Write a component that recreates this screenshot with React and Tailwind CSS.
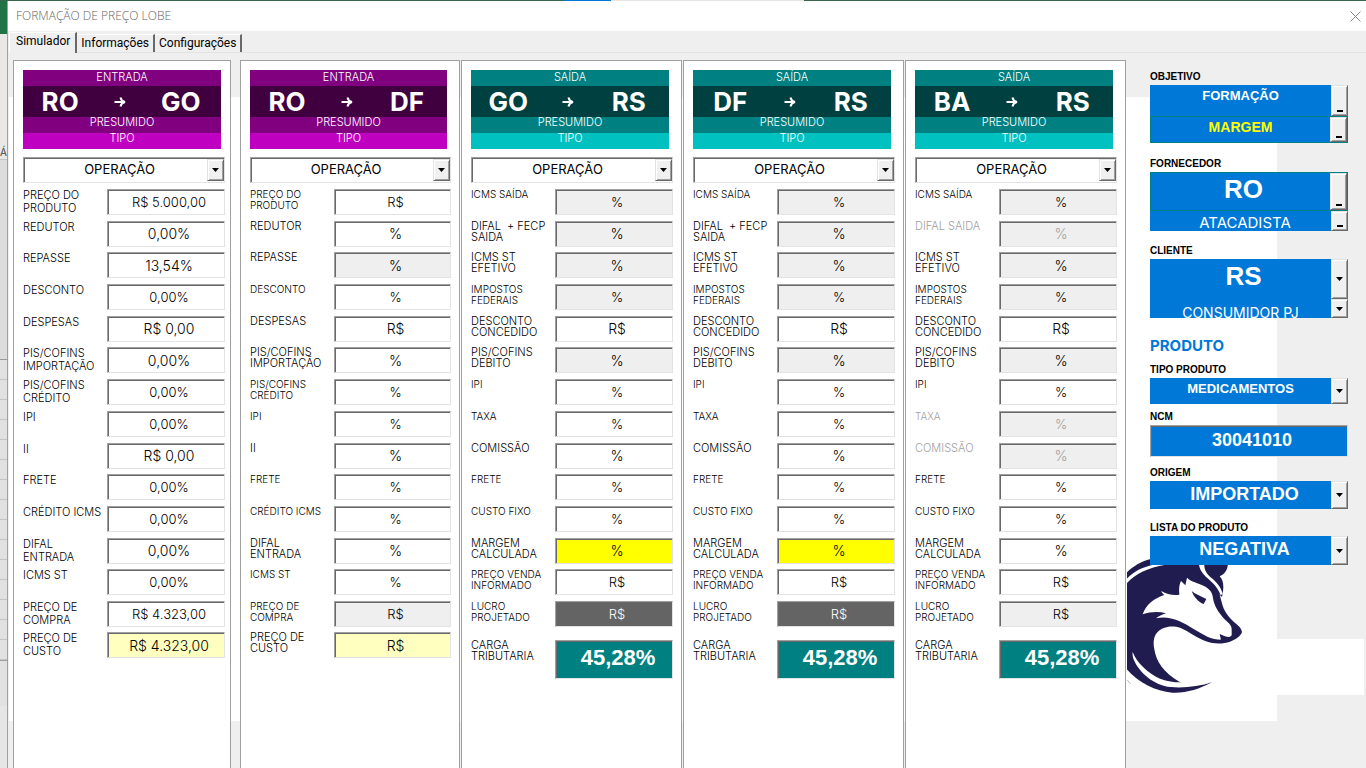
import React from "react";

const BODY = "font-['Inter',sans-serif]";

const ENTRY_LABELS = [
  "PREÇO DO\nPRODUTO", "REDUTOR", "REPASSE", "DESCONTO", "DESPESAS",
  "PIS/COFINS\nIMPORTAÇÃO", "PIS/COFINS\nCRÉDITO", "IPI", "II", "FRETE",
  "CRÉDITO ICMS", "DIFAL\nENTRADA", "ICMS ST", "PREÇO DE\nCOMPRA", "PREÇO DE\nCUSTO",
];
const ENTRY_A = [
  "R$ 5.000,00", "0,00%", "13,54%", "0,00%", "R$ 0,00", "0,00%", "0,00%", "0,00%",
  "R$ 0,00", "0,00%", "0,00%", "0,00%", "0,00%", "R$ 4.323,00", "R$ 4.323,00",
];
const ENTRY_B = ["R$", "%", "%", "%", "R$", "%", "%", "%", "%", "%", "%", "%", "%", "R$", "R$"];
const EXIT_LABELS = [
  "ICMS SAÍDA", "DIFAL  + FECP\nSAIDA", "ICMS ST\nEFETIVO", "IMPOSTOS\nFEDERAIS",
  "DESCONTO\nCONCEDIDO", "PIS/COFINS\nDEBITO", "IPI", "TAXA", "COMISSÃO", "FRETE",
  "CUSTO FIXO", "MARGEM\nCALCULADA", "PREÇO VENDA\nINFORMADO", "LUCRO\nPROJETADO",
];
const EXIT_VALUES = ["%", "%", "%", "%", "R$", "%", "%", "%", "%", "%", "%", "%", "R$", "R$"];
const LARGE = [1, 2, 4, 5, 8, 11, 14];

const TONES = {
  white: "bg-white text-black",
  gray: "bg-[#efefef] text-black",
  off: "bg-[#efefef] text-[#a0a0a0]",
  cream: "bg-[#ffffc0] text-black",
  yellow: "bg-[#ffff00] text-black",
  dark: "bg-[#646464] text-white",
};

const PURPLE = { mid: "bg-[#800080]", deep: "bg-[#400040]", light: "bg-[#c000c0]" };
const TEAL = { mid: "bg-[#008080]", deep: "bg-[#004040]", light: "bg-[#00c0c0]" };

const SUNKEN =
  "border border-t-[#a0a0a0] border-l-[#a0a0a0] border-r-[#e3e3e3] border-b-[#e3e3e3] shadow-[inset_1px_1px_0_#696969]";
const RAISED =
  "bg-[#f0f0f0] border border-t-[#e3e3e3] border-l-[#e3e3e3] border-r-[#696969] border-b-[#696969] shadow-[inset_1px_1px_0_#ffffff,inset_-1px_-1px_0_#a0a0a0]";

function Field({ id, label, value, tone, large, loose }) {
  const off = tone === "off";
  const size = loose ? "text-[11px] leading-[13px]" : large ? "text-[11px] leading-[11px]" : "text-[10px] leading-[11px]";
  return (
    <div className="flex h-[26px]">
      <label
        htmlFor={id}
        className={`w-[84px] shrink-0 whitespace-pre font-light ${size} ${off ? "text-[#a0a0a0]" : "text-black"}`}
      >
        {label}
      </label>
      <input
        id={id}
        defaultValue={value}
        disabled={off}
        className={`h-[26px] w-0 min-w-0 flex-1 rounded-none pl-[6px] text-center font-light outline-none ${large ? "text-[14px]" : "text-[13px]"} ${SUNKEN} ${TONES[tone]}`}
      />
    </div>
  );
}

function Arrow() {
  return (
    <svg width="7" height="4" viewBox="0 0 7 4" className="block" aria-hidden="true">
      <path d="M0 0h7L3.5 4z" fill="#000" />
    </svg>
  );
}

function RouteHeader({ kind, from, to, colors }) {
  return (
    <div className="mr-[4px] text-center text-[11px] leading-[14px] font-light text-white">
      <div className={`h-4 ${colors.mid}`}>{kind}</div>
      <div className={`grid h-[31px] grid-cols-3 items-center pr-[10px] pl-[7px] text-[26px] font-bold leading-none ${colors.deep}`}>
        <span>{from}</span>
        <span className="flex justify-center">
          <svg width="12" height="12" viewBox="0 0 12 12" fill="none" stroke="#fff" strokeWidth="2" aria-label="para">
            <path d="M0.5 6H10M6.5 1.5C7 4 8.5 5.5 11 6C8.500 6.500 7 8 6.500 10.500" />
          </svg>
        </span>
        <span>{to}</span>
      </div>
      <div className={`h-4 leading-[11px] ${colors.mid}`}>PRESUMIDO</div>
      <div className={`h-4 leading-[11px] ${colors.light}`}>TIPO</div>
    </div>
  );
}

function Column({ id, kind, from, to, colors, labels, values, tones, loose, total, className }) {
  const fields = labels.map((label, i) => ({
    id: `${id}-${i}`,
    label,
    value: values[i],
    tone: tones[i] || "white",
    large: LARGE.includes(i),
    loose,
  }));
  return (
    <section className={`flex min-w-0 flex-col border border-b-0 border-[#a0a0a0] bg-white pt-[9px] pl-[9px] ${className}`}>
      <RouteHeader kind={kind} from={from} to={to} colors={colors} />
      <div className={`mt-2 flex h-[26px] bg-white ${SUNKEN}`}>
        <select
          aria-label={`Operação ${from} ${to}`}
          className="min-w-0 flex-1 appearance-none bg-transparent pl-2 text-center text-[13px] outline-none"
        >
          <option>OPERAÇÃO</option>
        </select>
        <span className={`my-px flex w-[17px] items-center justify-center ${RAISED}`}>
          <Arrow />
        </span>
      </div>
      <div className="mt-[6px] flex h-[438px] flex-col justify-between">
        {fields.slice(0, 14).map((f) => (
          <Field key={f.id} {...f} />
        ))}
      </div>
      {fields.slice(14).map((f) => (
        <div key={f.id} className="mt-[5px]">
          <Field {...f} />
        </div>
      ))}
      {total && (
        <div className="mt-[13px] flex h-[39px]">
          <label htmlFor={`${id}-total`} className="w-[84px] shrink-0 whitespace-pre text-[11px] leading-[11px] font-light">
            {"CARGA\nTRIBUTARIA"}
          </label>
          <input
            id={`${id}-total`}
            defaultValue={total}
            className={`w-0 min-w-0 flex-1 rounded-none bg-[#008080] pb-1 pl-2 text-center font-['Liberation_Sans',sans-serif] text-[22px] font-bold text-white outline-none ${SUNKEN}`}
          />
        </div>
      )}
    </section>
  );
}

function Combo({ id, name, value, height, text, framed, dash }) {
  return (
    <div className={`flex ${height} ${framed ? "border border-[#008080]" : ""}`}>
      <select
        id={id}
        aria-label={name}
        className={`min-w-0 flex-1 appearance-none overflow-hidden rounded-none bg-[#0078d7] text-center outline-none ${text}`}
      >
        <option>{value}</option>
      </select>
      <span className={`flex w-[17px] justify-center ${dash ? "items-end pb-[3px]" : "items-center"} ${RAISED}`}>
        {dash ? <span className="h-[2px] w-[6px] bg-black" /> : <Arrow />}
      </span>
    </div>
  );
}

const ARIAL = "font-['Liberation_Sans',sans-serif] font-bold";
const CAPTION = `block h-[14px] text-[10px] leading-[12px] text-black ${ARIAL}`;

function SidePanel() {
  return (
    <aside className="w-[240px] shrink-0 pt-[11px] pr-[18px] pl-6">
      <label htmlFor="objetivo" className={CAPTION}>OBJETIVO</label>
      <Combo id="objetivo" value="FORMAÇÃO" dash height="h-[31px]" text={`pb-[9px] text-[13px] text-white ${ARIAL}`} />
      <Combo name="Margem" value="MARGEM" dash framed height="h-[27px]" text={`pb-[5px] text-[14px] text-[#ffff00] ${ARIAL}`} />

      <label htmlFor="fornecedor" className={`mt-[15px] ${CAPTION}`}>FORNECEDOR</label>
      <Combo id="fornecedor" value="RO" dash framed height="h-[39px]" text={`pb-[5px] pl-[6px] text-[26px] leading-[28px] text-white ${ARIAL}`} />
      <Combo name="Tipo de fornecedor" value="ATACADISTA" dash height="h-[20px]" text="pt-[2px] pl-[9px] text-[15px] leading-none text-white" />

      <label htmlFor="cliente" className={`mt-[14px] ${CAPTION}`}>CLIENTE</label>
      <Combo id="cliente" value="RS" height="h-[40px]" text={`pb-[7px] pl-[6px] text-[26px] leading-[28px] text-white ${ARIAL}`} />
      <Combo name="Tipo de cliente" value="CONSUMIDOR PJ" height="h-[19px]" text="pt-[7px] text-[14px] leading-none text-white" />

      <h2 className="mt-5 text-[15px] font-bold leading-[16px] text-[#0078d7]">PRODUTO</h2>
      <label htmlFor="tipo" className={`mt-[10px] ${CAPTION}`}>TIPO PRODUTO</label>
      <Combo id="tipo" value="MEDICAMENTOS" height="h-[26px]" text={`pb-[5px] text-[13px] text-white ${ARIAL}`} />

      <label htmlFor="ncm" className={`mt-[7px] ${CAPTION}`}>NCM</label>
      <input
        id="ncm"
        defaultValue="30041010"
        className={`block h-[32px] w-full rounded-none bg-[#0078d7] pb-px pl-[6px] text-center text-[18px] text-white outline-none ${ARIAL} ${SUNKEN}`}
      />

      <label htmlFor="origem" className={`mt-[10px] ${CAPTION}`}>ORIGEM</label>
      <Combo id="origem" value="IMPORTADO" height="h-[28px]" text={`pb-[2px] pl-2 text-[18px] text-white ${ARIAL}`} />

      <label htmlFor="lista" className={`mt-[13px] ${CAPTION}`}>LISTA DO PRODUTO</label>
      <Combo id="lista" value="NEGATIVA" height="h-[29px]" text={`pb-[3px] pl-2 text-[18px] text-white ${ARIAL}`} />
    </aside>
  );
}

function Wolf() {
  return (
    <svg width="150" height="165" viewBox="9 0 450 495" className="shrink-0" aria-hidden="true">
      <path
        fill="#211c50"
        d="M0 58C20 36 45 18 80 9H314L311 30C309 45 299 56 287 61C298 72 301 92 295 116C296 125 290 124 286 112C290 128 294 145 300 160C308 176 318 188 330 198C345 210 352 217 354 228C351 240 335 250 318 257C298 264 270 265 246 256C220 246 200 230 170 216C140 206 115 214 101 228C88 240 87 262 91 280C96 315 118 350 167 378C195 392 235 388 264 379C225 400 185 412 145 410C90 406 35 375 0 330Z"
      />
      <g fill="#fff">
        <path d="M0 92C25 58 65 36 125 26H88C50 34 22 50 0 78Z" />
        <path d="M225 22C225 40 236 54 250 66C268 82 282 95 290 118L296 113C290 90 276 76 258 62C244 50 240 36 241 22Z" />
        <path d="M56 175C66 145 92 126 121 117C116 113 113 109 112 105C128 115 148 119 166 116C164 98 166 84 171 75L184 88L189 65C202 78 222 80 240 90C256 98 265 108 267 126C270 150 285 172 304 192C316 202 324 210 323 222V238C318 245 311 244 303 241L287 234C288 241 291 247 290 251C280 250 262 248 250 242C220 228 195 208 165 195C142 185 118 182 96 187C104 181 114 175 126 172C105 166 80 167 56 175Z" />
        <path d="M26 288C38 320 72 352 108 368C130 377 150 378 168 379C195 385 230 386 264 379C225 391 180 397 140 393C90 388 45 350 28 308C26 300 25 294 26 288Z" />
      </g>
      <path fill="#211c50" d="M203 105C214 115 230 120 247 129L239 144C223 138 210 124 203 105Z" />
      <path fill="none" stroke="#211c50" d="M9 371L19 383" />
    </svg>
  );
}

function Backdrop() {
  return (
    <div className="flex min-w-0 items-start pt-11 [grid-area:1/1]" aria-hidden="true">
      <div className="flex h-[624px] min-w-0 flex-1 items-end justify-end bg-white">
        <Wolf />
      </div>
      <div className="mt-[542px] mr-[2px] h-14 w-[87px] bg-white" />
    </div>
  );
}

function SheetEdge() {
  return (
    <div className="flex w-2 shrink-0 flex-col overflow-hidden border-r border-[#a0a0a0] bg-[#e1e1e1] text-[10px] text-[#444]" aria-hidden="true">
      <div className="h-[33px] shrink-0 bg-[#217346]" />
      <div className="h-[126px] shrink-0 border-b border-[#c4c4c4] bg-[#e9e8e7] pt-[110px] leading-[16px]">Á</div>
      <div className="h-[200px] shrink-0 border-b border-[#999] bg-[#dcdcdc]" />
      {Array.from({ length: 15 }, (_, i) => (
        <div key={i} className="h-5 shrink-0 border-b border-[#c4c4c4]" />
      ))}
      <div className="h-[46px] shrink-0 border-t border-[#a0a0a0]" />
      <div className="flex-1 bg-[#e6e6e6]" />
    </div>
  );
}

const rep = (tone, indexes) => Object.fromEntries(indexes.map((i) => [i, tone]));
const EXIT_TONES = { ...rep("gray", [0, 1, 2, 3, 5]), 11: "yellow", 13: "dark" };

export default function App() {
  return (
    <div className={`flex h-screen flex-col overflow-hidden bg-[#efefef] ${BODY}`}>
      <div className="flex h-px shrink-0 bg-[#39664d]">
        <div className="ml-[563px] w-12 bg-[#0078d7]" />
        <div className="w-[193px] bg-[#e5e5e5]" />
      </div>
      <div className="flex min-h-0 flex-1">
        <SheetEdge />
        <div className="flex min-w-0 flex-1 flex-col">
          <header className="flex h-[30px] shrink-0 items-center justify-between bg-white pr-[5px] pl-2">
            <h1 className="font-['Open_Sans',sans-serif] text-[12px] font-light text-[#666]">FORMAÇÃO DE PREÇO LOBE</h1>
            <button aria-label="Fechar" className="flex h-4 w-[12px] items-center justify-center">
              <svg width="11" height="11" viewBox="0 0 11 11" stroke="#888" fill="none">
                <path d="M0.5 0.5l10 10M10.500 0.500l-10 10" />
              </svg>
            </button>
          </header>
          <nav className="flex h-[22px] shrink-0 items-end border-b border-[#e3e3e3] pl-px font-['Roboto',sans-serif] text-[12px] leading-[14px] text-black" role="tablist">
            <button role="tab" aria-selected="true" className="-mb-px h-[21px] border-t border-l border-r-2 border-t-white border-l-white border-r-[#696969] bg-[#efefef] pr-[5px] pb-[4px] pl-[6px]">Simulador</button>
            <button role="tab" aria-selected="false" className="h-[18px] border-t border-r-2 border-t-white border-r-[#696969] px-1 pb-px">Informações</button>
            <button role="tab" aria-selected="false" className="h-[18px] border-t border-r-2 border-t-white border-r-[#696969] px-1 pb-px">Configurações</button>
          </nav>
          <main className="grid min-h-0 flex-1 grid-cols-1 grid-rows-1 pl-px">
            <Backdrop />
            <div className="flex min-w-0 pt-[7px] [grid-area:1/1]">
              <div className="flex min-w-0 flex-1 pl-1">
                <Column className="mr-[9px] flex-[202] pr-[5px]" id="c1" kind="ENTRADA" from="RO" to="GO" colors={PURPLE} labels={ENTRY_LABELS} values={ENTRY_A} tones={{ 14: "cream" }} loose />
                <Column className="mr-px flex-[201] pr-[8px]" id="c2" kind="ENTRADA" from="RO" to="DF" colors={PURPLE} labels={ENTRY_LABELS} values={ENTRY_B} tones={{ 2: "gray", 13: "gray", 14: "cream" }} />
                <Column className="mr-px flex-[202] pr-[8px]" id="c3" kind="SAÍDA" from="GO" to="RS" colors={TEAL} labels={EXIT_LABELS} values={EXIT_VALUES} tones={EXIT_TONES} total="45,28%" />
                <Column className="mr-px flex-[202] pr-[8px]" id="c4" kind="SAÍDA" from="DF" to="RS" colors={TEAL} labels={EXIT_LABELS} values={EXIT_VALUES} tones={EXIT_TONES} total="45,28%" />
                <Column
                  className="flex-[202] pr-[8px]" id="c5" kind="SAÍDA" from="BA" to="RS" colors={TEAL}
                  labels={EXIT_LABELS.map((l, i) => (i === 1 ? "DIFAL SAIDA" : l))}
                  values={EXIT_VALUES}
                  tones={{ ...rep("gray", [0, 2, 3, 5, 13]), ...rep("off", [1, 7, 8]) }}
                  total="45,28%"
                />
              </div>
              <SidePanel />
            </div>
          </main>
        </div>
      </div>
    </div>
  );
}
